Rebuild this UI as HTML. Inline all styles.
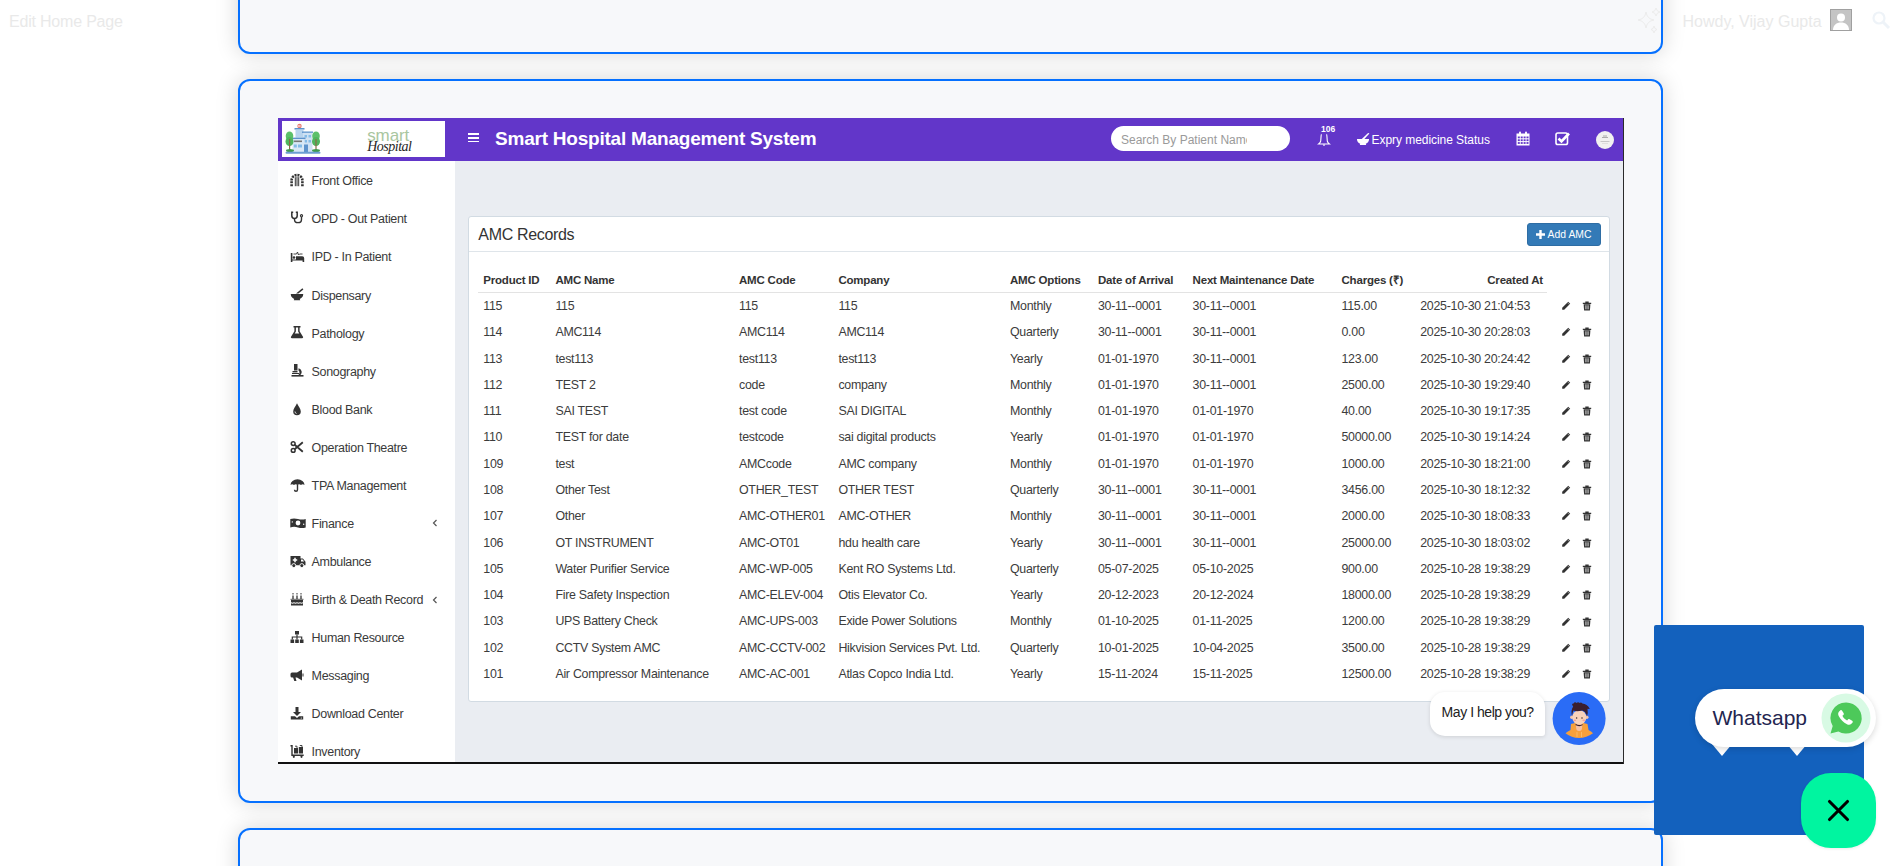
<!DOCTYPE html><html><head><meta charset="utf-8"><title>AMC Records</title><style>
*{box-sizing:border-box;margin:0;padding:0}
html,body{width:1900px;height:866px;overflow:hidden;background:#fff;font-family:"Liberation Sans",sans-serif}
body{position:relative}
.t{position:absolute;white-space:nowrap;line-height:1}
.a{position:absolute;display:block}
.card{position:absolute;left:238px;width:1425px;border:2px solid #0570ff;border-radius:12px;background:#f7f8fa;box-shadow:0 0 22px rgba(0,0,0,.17)}
</style></head><body>
<div class="card" style="top:-400px;height:454px"></div>
<div class="card" style="top:79px;height:724px"></div>
<div class="card" style="top:828px;height:400px"></div>
<div class="t" style="left:9.00px;top:14.00px;font-size:16px;font-weight:400;color:#e9e9e9;letter-spacing:-0.2px">Edit Home Page</div>
<div class="t" style="left:1682.50px;top:14.00px;font-size:16px;font-weight:400;color:#e9e9e9;">Howdy, Vijay Gupta</div>
<div class="a" style="left:1830px;top:9px;width:22px;height:22px;background:#c4c4c4;border:1px solid #a0a0a0;overflow:hidden"><svg width="20" height="20" viewBox="0 0 20 20" style="display:block"><circle cx="10" cy="7.5" r="4" fill="#fff"/><path d="M2 20c0-5 3.5-7.5 8-7.5s8 2.5 8 7.5z" fill="#fff"/></svg></div>
<svg class="a" style="left:1634px;top:6px;" width="30" height="30" viewBox="0 0 30 30"><path d="M12 6 Q13 13 20 14 Q13 15 12 22 Q11 15 4 14 Q11 13 12 6Z" fill="none" stroke="#ececec" stroke-width="1"/><path d="M22 2 Q22.5 5.5 26 6 Q22.5 6.5 22 10 Q21.5 6.5 18 6 Q21.5 5.5 22 2Z" fill="none" stroke="#ececec" stroke-width="1"/><path d="M20 20 Q20.4 23 23 23.5 Q20.4 24 20 27 Q19.6 24 17 23.5 Q19.6 23 20 20Z" fill="none" stroke="#ececec" stroke-width="1"/></svg>
<svg class="a" style="left:1870px;top:9px;" width="22" height="22" viewBox="0 0 22 22"><circle cx="9" cy="9" r="5.5" fill="none" stroke="#eef3f8" stroke-width="2.2"/><path d="M13 13l6 6" stroke="#eef3f8" stroke-width="3"/></svg>
<div class="a" style="left:278px;top:118px;width:1346px;height:646px;background:#eaedf2;overflow:hidden"></div>
<div class="a" style="left:278px;top:118px;width:1346px;height:43px;background:#6236c9"></div>
<div class="a" style="left:282px;top:121px;width:163px;height:36px;background:#fff"></div>
<svg class="a" style="left:285px;top:123px;" width="37" height="32" viewBox="0 0 37 32"><circle cx="14.5" cy="3" r="2.2" fill="#e8786e"/><path d="M14 2v2M13 3h3" stroke="#fff" stroke-width="0.6"/><rect x="9.5" y="5" width="10" height="1.6" fill="#5d93cc"/><rect x="10.5" y="6.6" width="8" height="8" fill="#b8d4ee"/><rect x="17" y="8.5" width="11" height="1.4" fill="#5d93cc"/><rect x="18" y="9.9" width="9.5" height="20" fill="#cfe1f3"/><rect x="19.5" y="12" width="2.5" height="2.5" fill="#84bce8"/><rect x="23.5" y="12" width="2.5" height="2.5" fill="#84bce8"/><rect x="19.5" y="17" width="2.5" height="2.5" fill="#84bce8"/><rect x="23.5" y="17" width="2.5" height="2.5" fill="#84bce8"/><rect x="6.5" y="14.6" width="14" height="1.6" fill="#5d93cc"/><rect x="7.5" y="16.2" width="12" height="13.6" fill="#d8e8f6"/><rect x="9" y="17.5" width="8" height="1.6" fill="#777"/><rect x="8.8" y="21.5" width="3" height="3" fill="#84bce8"/><rect x="13" y="21.5" width="4" height="3" fill="#84bce8"/><rect x="19" y="21.5" width="4" height="8.3" fill="#5d93cc"/><ellipse cx="4.5" cy="13" rx="3.8" ry="4.5" fill="#5cc06a"/><ellipse cx="4.5" cy="18.5" rx="4" ry="4.5" fill="#4fb55e"/><rect x="4" y="16" width="1.2" height="11" fill="#8a6a4a"/><ellipse cx="5" cy="27.5" rx="4" ry="1.5" fill="#3f9a4f"/><ellipse cx="31" cy="13" rx="3.8" ry="4.5" fill="#5cc06a"/><ellipse cx="31" cy="18.5" rx="4" ry="4.5" fill="#4fb55e"/><rect x="30.4" y="16" width="1.2" height="11" fill="#8a6a4a"/><ellipse cx="31" cy="27.5" rx="4" ry="1.5" fill="#3f9a4f"/><rect x="0.5" y="28.8" width="35" height="2" rx="1" fill="#6d9fd2"/></svg>
<div class="t" style="left:367.20px;top:127.00px;font-size:17px;font-weight:400;color:#a9c6a0;letter-spacing:-0.1px">smart</div>
<div class="t" style="left:367.20px;top:140.00px;font-size:14px;font-weight:400;color:#262626;font-family:'Liberation Serif',serif;font-style:italic;letter-spacing:-0.5px">Hospital</div>
<div class="a" style="left:468px;top:133.4px;width:11.4px;height:1.7px;background:#fff"></div>
<div class="a" style="left:468px;top:137px;width:11.4px;height:1.7px;background:#fff"></div>
<div class="a" style="left:468px;top:140.5px;width:11.4px;height:1.7px;background:#fff"></div>
<div class="t" style="left:495.00px;top:129.00px;font-size:19px;font-weight:700;color:#fff;letter-spacing:-0.22px">Smart Hospital Management System</div>
<div class="a" style="left:1111px;top:126px;width:179px;height:25px;background:#fff;border-radius:13px"></div>
<div class="a" style="left:1121px;top:126px;width:126px;height:25px;overflow:hidden"><div class="t" style="left:0px;top:8.00px;font-size:12px;font-weight:400;color:#9a9a9a;">Search By Patient Name</div></div>
<svg class="a" style="left:1317px;top:133px;" width="14" height="14" viewBox="0 0 14 14"><path d="M4.6 1.3Q4.2 1.3 4.1 3L3.7 8.2Q3.4 9.8 1.6 11H12.4Q10.6 9.8 10.3 8.2L9.9 3Q9.8 1.3 9.4 1.3" fill="none" stroke="#fff" stroke-width="1.1"/><path d="M5.8 11.6a1.2 1.2 0 0 0 2.4 0z" fill="#fff"/></svg>
<div class="t" style="left:1321.00px;top:125.00px;font-size:8.5px;font-weight:700;color:#fff;">106</div>
<svg class="a" style="left:1356px;top:132px;" width="14" height="14" viewBox="0 0 14 14"><path d="M1 7h12v0.5a6 5 0 0 1-3.2 4.3L10.2 13H3.8l.4-1.2A6 5 0 0 1 1 7.5z" fill="#fff"/><path d="M5.8 6.9l6-5.6q1-.6 1.6.3l-5 5.3z" fill="#fff"/></svg>
<div class="t" style="left:1371.50px;top:134.00px;font-size:12px;font-weight:400;color:#fff;letter-spacing:-0.05px">Expry medicine Status</div>
<svg class="a" style="left:1516px;top:131px;" width="14" height="15" viewBox="0 0 14 15"><path d="M0.5 2.5h13v12h-13z" fill="#fff"/><rect x="3" y="0.5" width="2" height="3" rx="1" fill="#fff"/><rect x="9" y="0.5" width="2" height="3" rx="1" fill="#fff"/><rect x="1.8" y="5.5" width="2" height="1.8" fill="#6236c9"/><rect x="4.7" y="5.5" width="2" height="1.8" fill="#6236c9"/><rect x="7.6" y="5.5" width="2" height="1.8" fill="#6236c9"/><rect x="10.5" y="5.5" width="2" height="1.8" fill="#6236c9"/><rect x="1.8" y="8.3" width="2" height="1.8" fill="#6236c9"/><rect x="4.7" y="8.3" width="2" height="1.8" fill="#6236c9"/><rect x="7.6" y="8.3" width="2" height="1.8" fill="#6236c9"/><rect x="10.5" y="8.3" width="2" height="1.8" fill="#6236c9"/><rect x="1.8" y="11.1" width="2" height="1.8" fill="#6236c9"/><rect x="4.7" y="11.1" width="2" height="1.8" fill="#6236c9"/><rect x="7.6" y="11.1" width="2" height="1.8" fill="#6236c9"/><rect x="10.5" y="11.1" width="2" height="1.8" fill="#6236c9"/></svg>
<svg class="a" style="left:1555px;top:131px;" width="17" height="15" viewBox="0 0 17 15"><rect x="1" y="2" width="11.5" height="11.5" rx="1.8" fill="none" stroke="#fff" stroke-width="1.6"/><path d="M3.5 7.5l3 3 7.5-8" fill="none" stroke="#fff" stroke-width="2.6"/></svg>
<svg class="a" style="left:1596px;top:130.5px;" width="18" height="18" viewBox="0 0 18 18"><circle cx="9" cy="9" r="9" fill="#f1f1f0"/><path d="M6 6.5h6M7 5h4" stroke="#9a9a9a" stroke-width="0.8"/><path d="M4.5 10.5h9" stroke="#bbb" stroke-width="0.8"/><path d="M6 12.5h6" stroke="#ccc" stroke-width="0.5"/></svg>
<div class="a" style="left:278px;top:161px;width:177px;height:601px;background:#fff"></div>
<svg class="a" style="left:290px;top:173.1px;" width="16" height="14" viewBox="0 0 16 14"><path d="M1.6 13.2V7.4a5.4 5.4 0 0 1 10.8 0v5.8" fill="none" stroke="#333" stroke-width="2.6" stroke-dasharray="2 0.9"/><path d="M5.3 4.2v9M7 3.6v9.6M8.7 4.2v9" stroke="#333" stroke-width="1"/></svg>
<div class="t" style="left:311.60px;top:175.00px;font-size:12.5px;font-weight:400;color:#3a3a3a;letter-spacing:-0.33px">Front Office</div>
<svg class="a" style="left:290px;top:211.2px;" width="16" height="14" viewBox="0 0 16 14"><path d="M3.2 1.2H1.8v3.6a2.7 2.7 0 0 0 5.4 0V1.2H5.8" fill="none" stroke="#333" stroke-width="1.5"/><path d="M4.5 7.6v.8a3.5 3.2 0 0 0 7 0V5.8" fill="none" stroke="#333" stroke-width="1.4"/><circle cx="11.5" cy="4.7" r="1.6" fill="#333"/><circle cx="11.5" cy="4.7" r="0.5" fill="#fff"/></svg>
<div class="t" style="left:311.60px;top:213.00px;font-size:12.5px;font-weight:400;color:#3a3a3a;letter-spacing:-0.33px">OPD - Out Patient</div>
<svg class="a" style="left:290px;top:249.2px;" width="16" height="14" viewBox="0 0 16 14"><path d="M0.8 4v9h1.6v-1.6h10.2V13h1.6V9.2a2 2 0 0 0-2-2H6v3.2H2.4V4z" fill="#333"/><circle cx="4" cy="8.5" r="1.3" fill="#333"/><path d="M3.5 5h3l1-2 1 3 1-1h3" fill="none" stroke="#333" stroke-width="0.9"/></svg>
<div class="t" style="left:311.60px;top:251.00px;font-size:12.5px;font-weight:400;color:#3a3a3a;letter-spacing:-0.33px">IPD - In Patient</div>
<svg class="a" style="left:290px;top:287.3px;" width="16" height="14" viewBox="0 0 16 14"><path d="M0.8 7h12.4v.6a6.2 5 0 0 1-3.4 4.3l.4 1.3H3.8l.4-1.3A6.2 5 0 0 1 .8 7.6z" fill="#333"/><path d="M6 6.6l6.4-5.4 1 1.2-5 4.2z" fill="#333"/></svg>
<div class="t" style="left:311.60px;top:290.00px;font-size:12.5px;font-weight:400;color:#3a3a3a;letter-spacing:-0.33px">Dispensary</div>
<svg class="a" style="left:290px;top:325.4px;" width="16" height="14" viewBox="0 0 16 14"><path d="M3.5 1h7v1.6H9.6v3.6l3.4 5.6a1 1 0 0 1-.9 1.5H1.9a1 1 0 0 1-.9-1.5l3.4-5.6V2.6H3.5z" fill="#333"/><path d="M5.9 2.6h2.2v4l1.2 2H4.7l1.2-2z" fill="#fff"/></svg>
<div class="t" style="left:311.60px;top:328.00px;font-size:12.5px;font-weight:400;color:#3a3a3a;letter-spacing:-0.33px">Pathology</div>
<svg class="a" style="left:290px;top:363.4px;" width="16" height="14" viewBox="0 0 16 14"><path d="M4 1h3.5v6.5H4z" fill="#333"/><path d="M2.5 8h5v1.4h-5z" fill="#333"/><path d="M8.5 5.2a4 4 0 0 1 1.8 7H8a2.8 2.8 0 0 0 .5-4.6z" fill="#333"/><path d="M1.5 12h12v1.6h-12z" fill="#333"/><path d="M2 10.5h7" stroke="#333" stroke-width="1"/></svg>
<div class="t" style="left:311.60px;top:366.00px;font-size:12.5px;font-weight:400;color:#3a3a3a;letter-spacing:-0.33px">Sonography</div>
<svg class="a" style="left:290px;top:401.5px;" width="16" height="14" viewBox="0 0 16 14"><path d="M7 1.2C5.6 4.5 3.2 6.6 3.2 9.4a3.8 3.8 0 0 0 7.6 0C10.8 6.6 8.4 4.5 7 1.2z" fill="#333"/><path d="M5 9.5a2 2 0 0 0 1.5 2" fill="none" stroke="#fff" stroke-width="0.8"/></svg>
<div class="t" style="left:311.60px;top:404.00px;font-size:12.5px;font-weight:400;color:#3a3a3a;letter-spacing:-0.33px">Blood Bank</div>
<svg class="a" style="left:290px;top:439.6px;" width="16" height="14" viewBox="0 0 16 14"><circle cx="3.2" cy="3.6" r="1.9" fill="none" stroke="#333" stroke-width="1.5"/><circle cx="3.2" cy="10.4" r="1.9" fill="none" stroke="#333" stroke-width="1.5"/><path d="M4.6 4.8L12.8 11.8M4.6 9.2L12.8 2.2" stroke="#333" stroke-width="1.8"/></svg>
<div class="t" style="left:311.60px;top:442.00px;font-size:12.5px;font-weight:400;color:#3a3a3a;letter-spacing:-0.33px">Operation Theatre</div>
<svg class="a" style="left:290px;top:477.7px;" width="16" height="14" viewBox="0 0 16 14"><path d="M7.5 1.2a7 5.8 0 0 0-7 5.8c1.1-1 2.3-1 3.5 0 1.1-1 2.3-1 3.5 0 1.1-1 2.3-1 3.5 0 1.1-1 2.3-1 3.5 0A7 5.8 0 0 0 7.5 1.2z" fill="#333"/><path d="M7.5 6.5v5.2a1.5 1.5 0 0 1-3 0" fill="none" stroke="#333" stroke-width="1.4"/></svg>
<div class="t" style="left:311.60px;top:480.00px;font-size:12.5px;font-weight:400;color:#3a3a3a;letter-spacing:-0.33px">TPA Management</div>
<svg class="a" style="left:290px;top:515.7px;" width="16" height="14" viewBox="0 0 16 14"><path fill-rule="evenodd" d="M0.3 3q3.7 -1.2 7.7 0t7.7 0v8.4q-3.7 1.2-7.7 0t-7.7 0z M8 4.6a2.4 2.4 0 1 0 0 4.8 2.4 2.4 0 1 0 0-4.8z M2.3 5.2a0.7 0.7 0 1 0 0 1.4 0.7 0.7 0 1 0 0-1.4z M13.7 7.6a0.7 0.7 0 1 0 0 1.4 0.7 0.7 0 1 0 0-1.4z" fill="#333"/></svg>
<div class="t" style="left:311.60px;top:518.00px;font-size:12.5px;font-weight:400;color:#3a3a3a;letter-spacing:-0.33px">Finance</div>
<svg class="a" style="left:432px;top:519.4px;" width="6" height="8" viewBox="0 0 6 8"><path d="M4.5 1L1.5 4l3 3" fill="none" stroke="#555" stroke-width="1.2"/></svg>
<svg class="a" style="left:290px;top:553.8px;" width="16" height="14" viewBox="0 0 16 14"><path d="M0.5 2h10v2.5h2.4l2.6 3.2v3.6H0.5z" fill="#333"/><circle cx="3.8" cy="11.6" r="2" fill="#333" stroke="#fff" stroke-width="0.9"/><circle cx="11.8" cy="11.6" r="2" fill="#333" stroke="#fff" stroke-width="0.9"/><path d="M5 3.8v4.4M2.8 6h4.4" stroke="#fff" stroke-width="1.5"/><path d="M11 5.5h1.6l1.5 2h-3.1z" fill="#fff"/></svg>
<div class="t" style="left:311.60px;top:556.00px;font-size:12.5px;font-weight:400;color:#3a3a3a;letter-spacing:-0.33px">Ambulance</div>
<svg class="a" style="left:290px;top:591.9px;" width="16" height="14" viewBox="0 0 16 14"><path d="M1 8h12v2.3c-1 .6-2 .6-3 0-1 .6-2 .6-3 0-1 .6-2 .6-3 0-1 .6-2 .6-3 0z" fill="#333"/><path d="M1 11.3c1 .5 2 .5 3 0 1 .5 2 .5 3 0 1 .5 2 .5 3 0 1 .5 2 .5 3 0V13.5H1z" fill="#333"/><path d="M3 3.5v3.5M7 3.5v3.5M11 3.5v3.5" stroke="#333" stroke-width="1.3"/><path d="M3 1v1.5M7 1v1.5M11 1v1.5" stroke="#333" stroke-width="1"/><path d="M0.5 7.3h13" stroke="#333" stroke-width="0.8"/></svg>
<div class="t" style="left:311.60px;top:594.00px;font-size:12.5px;font-weight:400;color:#3a3a3a;letter-spacing:-0.33px">Birth &amp; Death Record</div>
<svg class="a" style="left:432px;top:595.6px;" width="6" height="8" viewBox="0 0 6 8"><path d="M4.5 1L1.5 4l3 3" fill="none" stroke="#555" stroke-width="1.2"/></svg>
<svg class="a" style="left:290px;top:629.9px;" width="16" height="14" viewBox="0 0 16 14"><rect x="5" y="1" width="4" height="3.5" fill="#333"/><path d="M7 4.5v3M2.3 9.5V7h9.4v2.5M7 7v2.5" fill="none" stroke="#333" stroke-width="1.2"/><rect x="0.5" y="9.5" width="3.6" height="3.5" fill="#333"/><rect x="5.2" y="9.5" width="3.6" height="3.5" fill="#333"/><rect x="9.9" y="9.5" width="3.6" height="3.5" fill="#333"/></svg>
<div class="t" style="left:311.60px;top:632.00px;font-size:12.5px;font-weight:400;color:#3a3a3a;letter-spacing:-0.33px">Human Resource</div>
<svg class="a" style="left:290px;top:668.0px;" width="16" height="14" viewBox="0 0 16 14"><path d="M12 1.5v11l-5-3H5.5l1 3.5h-2.2l-1.2-3.5H2a1.5 1.5 0 0 1-1.5-1.5V6a1.5 1.5 0 0 1 1.5-1.5h5z" fill="#333"/><path d="M12.5 5.5h1v3h-1z" fill="#333"/></svg>
<div class="t" style="left:311.60px;top:670.00px;font-size:12.5px;font-weight:400;color:#3a3a3a;letter-spacing:-0.33px">Messaging</div>
<svg class="a" style="left:290px;top:706.1px;" width="16" height="14" viewBox="0 0 16 14"><path d="M5.5 1h3v5h2.5L7 10 3 6h2.5z" fill="#333"/><path d="M0.8 10.3h4.2l2 1.8 2-1.8h4.2v3.2H.8z" fill="#333"/><circle cx="11.3" cy="12" r="0.6" fill="#fff"/></svg>
<div class="t" style="left:311.60px;top:708.00px;font-size:12.5px;font-weight:400;color:#3a3a3a;letter-spacing:-0.33px">Download Center</div>
<svg class="a" style="left:290px;top:744.1px;" width="16" height="14" viewBox="0 0 16 14"><path d="M0.5 1h2.2v9.5h11v1.4H1.3V2.4H.5z" fill="#333"/><rect x="4" y="4" width="4" height="5.5" fill="#333"/><rect x="8.8" y="3" width="4.2" height="6.5" fill="#333"/><path d="M5 2.2h2v1.8M9.8 1.5h2.2v1.5" fill="none" stroke="#333" stroke-width="0.9"/><circle cx="3.8" cy="12.8" r="1.1" fill="#333"/><circle cx="11.5" cy="12.8" r="1.1" fill="#333"/></svg>
<div class="t" style="left:311.60px;top:746.00px;font-size:12.5px;font-weight:400;color:#3a3a3a;letter-spacing:-0.33px">Inventory</div>
<div class="a" style="left:278px;top:762px;width:1346px;height:2px;background:#111"></div>
<div class="a" style="left:1623px;top:118px;width:1px;height:646px;background:#2a2a2a"></div>
<div class="a" style="left:468px;top:216px;width:1142px;height:486px;background:#fff;border:1px solid #d2dbe3;border-radius:3px"></div>
<div class="a" style="left:469px;top:251px;width:1140px;height:1px;background:#dfe5ea"></div>
<div class="t" style="left:478.30px;top:227.00px;font-size:16px;font-weight:400;color:#333;letter-spacing:-0.33px">AMC Records</div>
<div class="a" style="left:1527px;top:223px;width:74px;height:23px;background:#337ab7;border:1px solid #2e6da4;border-radius:3px"></div>
<svg class="a" style="left:1536px;top:230px;" width="9" height="9" viewBox="0 0 9 9"><path d="M3.3 0h2.4v3.3H9v2.4H5.7V9H3.3V5.7H0V3.3h3.3z" fill="#fff"/></svg>
<div class="t" style="left:1547.60px;top:230.00px;font-size:10.4px;font-weight:400;color:#fff;">Add AMC</div>
<div class="t" style="left:483.30px;top:275.00px;font-size:11.5px;font-weight:700;color:#333;letter-spacing:-0.2px">Product ID</div>
<div class="t" style="left:555.40px;top:275.00px;font-size:11.5px;font-weight:700;color:#333;letter-spacing:-0.2px">AMC Name</div>
<div class="t" style="left:739.00px;top:275.00px;font-size:11.5px;font-weight:700;color:#333;letter-spacing:-0.2px">AMC Code</div>
<div class="t" style="left:838.40px;top:275.00px;font-size:11.5px;font-weight:700;color:#333;letter-spacing:-0.2px">Company</div>
<div class="t" style="left:1010.00px;top:275.00px;font-size:11.5px;font-weight:700;color:#333;letter-spacing:-0.2px">AMC Options</div>
<div class="t" style="left:1098.00px;top:275.00px;font-size:11.5px;font-weight:700;color:#333;letter-spacing:-0.2px">Date of Arrival</div>
<div class="t" style="left:1192.60px;top:275.00px;font-size:11.5px;font-weight:700;color:#333;letter-spacing:-0.2px">Next Maintenance Date</div>
<div class="t" style="left:1341.50px;top:275.00px;font-size:11.5px;font-weight:700;color:#333;letter-spacing:-0.2px">Charges (₹)</div>
<div class="t" style="right:357.00px;top:275.00px;font-size:11.5px;font-weight:700;color:#333;letter-spacing:-0.2px">Created At</div>
<div class="a" style="left:478px;top:292px;width:1069px;height:1px;background:#e3e3e3"></div>
<div class="t" style="left:483.30px;top:300.00px;font-size:12.4px;font-weight:400;color:#3c3c3c;letter-spacing:-0.27px">115</div>
<div class="t" style="left:555.40px;top:300.00px;font-size:12.4px;font-weight:400;color:#3c3c3c;letter-spacing:-0.27px">115</div>
<div class="t" style="left:739.00px;top:300.00px;font-size:12.4px;font-weight:400;color:#3c3c3c;letter-spacing:-0.27px">115</div>
<div class="t" style="left:838.40px;top:300.00px;font-size:12.4px;font-weight:400;color:#3c3c3c;letter-spacing:-0.27px">115</div>
<div class="t" style="left:1010.00px;top:300.00px;font-size:12.4px;font-weight:400;color:#3c3c3c;letter-spacing:-0.27px">Monthly</div>
<div class="t" style="left:1098.00px;top:300.00px;font-size:12.4px;font-weight:400;color:#3c3c3c;letter-spacing:-0.27px">30-11--0001</div>
<div class="t" style="left:1192.60px;top:300.00px;font-size:12.4px;font-weight:400;color:#3c3c3c;letter-spacing:-0.27px">30-11--0001</div>
<div class="t" style="left:1341.50px;top:300.00px;font-size:12.4px;font-weight:400;color:#3c3c3c;letter-spacing:-0.27px">115.00</div>
<div class="t" style="left:1420.20px;top:300.00px;font-size:12.4px;font-weight:400;color:#3c3c3c;letter-spacing:-0.27px">2025-10-30 21:04:53</div>
<svg class="a" style="left:1561px;top:301.0px;" width="10" height="10" viewBox="0 0 10 10"><path d="M7.2 0.8l2 2-6 6H1.2v-2z" fill="#333"/><path d="M6.4 1.6l2 2" stroke="#fff" stroke-width="0.5"/></svg>
<svg class="a" style="left:1582px;top:301.0px;" width="10" height="10" viewBox="0 0 10 10"><path d="M0.8 1.8h8.4v1.2H.8z M3.3.6h3.4v1.2H3.3z" fill="#333"/><path d="M1.6 3.2h6.8l-.5 6.3H2.1z" fill="#333"/><path d="M3.7 4.3v4M5 4.3v4M6.3 4.3v4" stroke="#fff" stroke-width="0.6"/></svg>
<div class="t" style="left:483.30px;top:326.00px;font-size:12.4px;font-weight:400;color:#3c3c3c;letter-spacing:-0.27px">114</div>
<div class="t" style="left:555.40px;top:326.00px;font-size:12.4px;font-weight:400;color:#3c3c3c;letter-spacing:-0.27px">AMC114</div>
<div class="t" style="left:739.00px;top:326.00px;font-size:12.4px;font-weight:400;color:#3c3c3c;letter-spacing:-0.27px">AMC114</div>
<div class="t" style="left:838.40px;top:326.00px;font-size:12.4px;font-weight:400;color:#3c3c3c;letter-spacing:-0.27px">AMC114</div>
<div class="t" style="left:1010.00px;top:326.00px;font-size:12.4px;font-weight:400;color:#3c3c3c;letter-spacing:-0.27px">Quarterly</div>
<div class="t" style="left:1098.00px;top:326.00px;font-size:12.4px;font-weight:400;color:#3c3c3c;letter-spacing:-0.27px">30-11--0001</div>
<div class="t" style="left:1192.60px;top:326.00px;font-size:12.4px;font-weight:400;color:#3c3c3c;letter-spacing:-0.27px">30-11--0001</div>
<div class="t" style="left:1341.50px;top:326.00px;font-size:12.4px;font-weight:400;color:#3c3c3c;letter-spacing:-0.27px">0.00</div>
<div class="t" style="left:1420.20px;top:326.00px;font-size:12.4px;font-weight:400;color:#3c3c3c;letter-spacing:-0.27px">2025-10-30 20:28:03</div>
<svg class="a" style="left:1561px;top:327.3px;" width="10" height="10" viewBox="0 0 10 10"><path d="M7.2 0.8l2 2-6 6H1.2v-2z" fill="#333"/><path d="M6.4 1.6l2 2" stroke="#fff" stroke-width="0.5"/></svg>
<svg class="a" style="left:1582px;top:327.3px;" width="10" height="10" viewBox="0 0 10 10"><path d="M0.8 1.8h8.4v1.2H.8z M3.3.6h3.4v1.2H3.3z" fill="#333"/><path d="M1.6 3.2h6.8l-.5 6.3H2.1z" fill="#333"/><path d="M3.7 4.3v4M5 4.3v4M6.3 4.3v4" stroke="#fff" stroke-width="0.6"/></svg>
<div class="t" style="left:483.30px;top:353.00px;font-size:12.4px;font-weight:400;color:#3c3c3c;letter-spacing:-0.27px">113</div>
<div class="t" style="left:555.40px;top:353.00px;font-size:12.4px;font-weight:400;color:#3c3c3c;letter-spacing:-0.27px">test113</div>
<div class="t" style="left:739.00px;top:353.00px;font-size:12.4px;font-weight:400;color:#3c3c3c;letter-spacing:-0.27px">test113</div>
<div class="t" style="left:838.40px;top:353.00px;font-size:12.4px;font-weight:400;color:#3c3c3c;letter-spacing:-0.27px">test113</div>
<div class="t" style="left:1010.00px;top:353.00px;font-size:12.4px;font-weight:400;color:#3c3c3c;letter-spacing:-0.27px">Yearly</div>
<div class="t" style="left:1098.00px;top:353.00px;font-size:12.4px;font-weight:400;color:#3c3c3c;letter-spacing:-0.27px">01-01-1970</div>
<div class="t" style="left:1192.60px;top:353.00px;font-size:12.4px;font-weight:400;color:#3c3c3c;letter-spacing:-0.27px">30-11--0001</div>
<div class="t" style="left:1341.50px;top:353.00px;font-size:12.4px;font-weight:400;color:#3c3c3c;letter-spacing:-0.27px">123.00</div>
<div class="t" style="left:1420.20px;top:353.00px;font-size:12.4px;font-weight:400;color:#3c3c3c;letter-spacing:-0.27px">2025-10-30 20:24:42</div>
<svg class="a" style="left:1561px;top:353.6px;" width="10" height="10" viewBox="0 0 10 10"><path d="M7.2 0.8l2 2-6 6H1.2v-2z" fill="#333"/><path d="M6.4 1.6l2 2" stroke="#fff" stroke-width="0.5"/></svg>
<svg class="a" style="left:1582px;top:353.6px;" width="10" height="10" viewBox="0 0 10 10"><path d="M0.8 1.8h8.4v1.2H.8z M3.3.6h3.4v1.2H3.3z" fill="#333"/><path d="M1.6 3.2h6.8l-.5 6.3H2.1z" fill="#333"/><path d="M3.7 4.3v4M5 4.3v4M6.3 4.3v4" stroke="#fff" stroke-width="0.6"/></svg>
<div class="t" style="left:483.30px;top:379.00px;font-size:12.4px;font-weight:400;color:#3c3c3c;letter-spacing:-0.27px">112</div>
<div class="t" style="left:555.40px;top:379.00px;font-size:12.4px;font-weight:400;color:#3c3c3c;letter-spacing:-0.27px">TEST 2</div>
<div class="t" style="left:739.00px;top:379.00px;font-size:12.4px;font-weight:400;color:#3c3c3c;letter-spacing:-0.27px">code</div>
<div class="t" style="left:838.40px;top:379.00px;font-size:12.4px;font-weight:400;color:#3c3c3c;letter-spacing:-0.27px">company</div>
<div class="t" style="left:1010.00px;top:379.00px;font-size:12.4px;font-weight:400;color:#3c3c3c;letter-spacing:-0.27px">Monthly</div>
<div class="t" style="left:1098.00px;top:379.00px;font-size:12.4px;font-weight:400;color:#3c3c3c;letter-spacing:-0.27px">01-01-1970</div>
<div class="t" style="left:1192.60px;top:379.00px;font-size:12.4px;font-weight:400;color:#3c3c3c;letter-spacing:-0.27px">30-11--0001</div>
<div class="t" style="left:1341.50px;top:379.00px;font-size:12.4px;font-weight:400;color:#3c3c3c;letter-spacing:-0.27px">2500.00</div>
<div class="t" style="left:1420.20px;top:379.00px;font-size:12.4px;font-weight:400;color:#3c3c3c;letter-spacing:-0.27px">2025-10-30 19:29:40</div>
<svg class="a" style="left:1561px;top:379.9px;" width="10" height="10" viewBox="0 0 10 10"><path d="M7.2 0.8l2 2-6 6H1.2v-2z" fill="#333"/><path d="M6.4 1.6l2 2" stroke="#fff" stroke-width="0.5"/></svg>
<svg class="a" style="left:1582px;top:379.9px;" width="10" height="10" viewBox="0 0 10 10"><path d="M0.8 1.8h8.4v1.2H.8z M3.3.6h3.4v1.2H3.3z" fill="#333"/><path d="M1.6 3.2h6.8l-.5 6.3H2.1z" fill="#333"/><path d="M3.7 4.3v4M5 4.3v4M6.3 4.3v4" stroke="#fff" stroke-width="0.6"/></svg>
<div class="t" style="left:483.30px;top:405.00px;font-size:12.4px;font-weight:400;color:#3c3c3c;letter-spacing:-0.27px">111</div>
<div class="t" style="left:555.40px;top:405.00px;font-size:12.4px;font-weight:400;color:#3c3c3c;letter-spacing:-0.27px">SAI TEST</div>
<div class="t" style="left:739.00px;top:405.00px;font-size:12.4px;font-weight:400;color:#3c3c3c;letter-spacing:-0.27px">test code</div>
<div class="t" style="left:838.40px;top:405.00px;font-size:12.4px;font-weight:400;color:#3c3c3c;letter-spacing:-0.27px">SAI DIGITAL</div>
<div class="t" style="left:1010.00px;top:405.00px;font-size:12.4px;font-weight:400;color:#3c3c3c;letter-spacing:-0.27px">Monthly</div>
<div class="t" style="left:1098.00px;top:405.00px;font-size:12.4px;font-weight:400;color:#3c3c3c;letter-spacing:-0.27px">01-01-1970</div>
<div class="t" style="left:1192.60px;top:405.00px;font-size:12.4px;font-weight:400;color:#3c3c3c;letter-spacing:-0.27px">01-01-1970</div>
<div class="t" style="left:1341.50px;top:405.00px;font-size:12.4px;font-weight:400;color:#3c3c3c;letter-spacing:-0.27px">40.00</div>
<div class="t" style="left:1420.20px;top:405.00px;font-size:12.4px;font-weight:400;color:#3c3c3c;letter-spacing:-0.27px">2025-10-30 19:17:35</div>
<svg class="a" style="left:1561px;top:406.2px;" width="10" height="10" viewBox="0 0 10 10"><path d="M7.2 0.8l2 2-6 6H1.2v-2z" fill="#333"/><path d="M6.4 1.6l2 2" stroke="#fff" stroke-width="0.5"/></svg>
<svg class="a" style="left:1582px;top:406.2px;" width="10" height="10" viewBox="0 0 10 10"><path d="M0.8 1.8h8.4v1.2H.8z M3.3.6h3.4v1.2H3.3z" fill="#333"/><path d="M1.6 3.2h6.8l-.5 6.3H2.1z" fill="#333"/><path d="M3.7 4.3v4M5 4.3v4M6.3 4.3v4" stroke="#fff" stroke-width="0.6"/></svg>
<div class="t" style="left:483.30px;top:431.00px;font-size:12.4px;font-weight:400;color:#3c3c3c;letter-spacing:-0.27px">110</div>
<div class="t" style="left:555.40px;top:431.00px;font-size:12.4px;font-weight:400;color:#3c3c3c;letter-spacing:-0.27px">TEST for date</div>
<div class="t" style="left:739.00px;top:431.00px;font-size:12.4px;font-weight:400;color:#3c3c3c;letter-spacing:-0.27px">testcode</div>
<div class="t" style="left:838.40px;top:431.00px;font-size:12.4px;font-weight:400;color:#3c3c3c;letter-spacing:-0.27px">sai digital products</div>
<div class="t" style="left:1010.00px;top:431.00px;font-size:12.4px;font-weight:400;color:#3c3c3c;letter-spacing:-0.27px">Yearly</div>
<div class="t" style="left:1098.00px;top:431.00px;font-size:12.4px;font-weight:400;color:#3c3c3c;letter-spacing:-0.27px">01-01-1970</div>
<div class="t" style="left:1192.60px;top:431.00px;font-size:12.4px;font-weight:400;color:#3c3c3c;letter-spacing:-0.27px">01-01-1970</div>
<div class="t" style="left:1341.50px;top:431.00px;font-size:12.4px;font-weight:400;color:#3c3c3c;letter-spacing:-0.27px">50000.00</div>
<div class="t" style="left:1420.20px;top:431.00px;font-size:12.4px;font-weight:400;color:#3c3c3c;letter-spacing:-0.27px">2025-10-30 19:14:24</div>
<svg class="a" style="left:1561px;top:432.4px;" width="10" height="10" viewBox="0 0 10 10"><path d="M7.2 0.8l2 2-6 6H1.2v-2z" fill="#333"/><path d="M6.4 1.6l2 2" stroke="#fff" stroke-width="0.5"/></svg>
<svg class="a" style="left:1582px;top:432.4px;" width="10" height="10" viewBox="0 0 10 10"><path d="M0.8 1.8h8.4v1.2H.8z M3.3.6h3.4v1.2H3.3z" fill="#333"/><path d="M1.6 3.2h6.8l-.5 6.3H2.1z" fill="#333"/><path d="M3.7 4.3v4M5 4.3v4M6.3 4.3v4" stroke="#fff" stroke-width="0.6"/></svg>
<div class="t" style="left:483.30px;top:458.00px;font-size:12.4px;font-weight:400;color:#3c3c3c;letter-spacing:-0.27px">109</div>
<div class="t" style="left:555.40px;top:458.00px;font-size:12.4px;font-weight:400;color:#3c3c3c;letter-spacing:-0.27px">test</div>
<div class="t" style="left:739.00px;top:458.00px;font-size:12.4px;font-weight:400;color:#3c3c3c;letter-spacing:-0.27px">AMCcode</div>
<div class="t" style="left:838.40px;top:458.00px;font-size:12.4px;font-weight:400;color:#3c3c3c;letter-spacing:-0.27px">AMC company</div>
<div class="t" style="left:1010.00px;top:458.00px;font-size:12.4px;font-weight:400;color:#3c3c3c;letter-spacing:-0.27px">Monthly</div>
<div class="t" style="left:1098.00px;top:458.00px;font-size:12.4px;font-weight:400;color:#3c3c3c;letter-spacing:-0.27px">01-01-1970</div>
<div class="t" style="left:1192.60px;top:458.00px;font-size:12.4px;font-weight:400;color:#3c3c3c;letter-spacing:-0.27px">01-01-1970</div>
<div class="t" style="left:1341.50px;top:458.00px;font-size:12.4px;font-weight:400;color:#3c3c3c;letter-spacing:-0.27px">1000.00</div>
<div class="t" style="left:1420.20px;top:458.00px;font-size:12.4px;font-weight:400;color:#3c3c3c;letter-spacing:-0.27px">2025-10-30 18:21:00</div>
<svg class="a" style="left:1561px;top:458.7px;" width="10" height="10" viewBox="0 0 10 10"><path d="M7.2 0.8l2 2-6 6H1.2v-2z" fill="#333"/><path d="M6.4 1.6l2 2" stroke="#fff" stroke-width="0.5"/></svg>
<svg class="a" style="left:1582px;top:458.7px;" width="10" height="10" viewBox="0 0 10 10"><path d="M0.8 1.8h8.4v1.2H.8z M3.3.6h3.4v1.2H3.3z" fill="#333"/><path d="M1.6 3.2h6.8l-.5 6.3H2.1z" fill="#333"/><path d="M3.7 4.3v4M5 4.3v4M6.3 4.3v4" stroke="#fff" stroke-width="0.6"/></svg>
<div class="t" style="left:483.30px;top:484.00px;font-size:12.4px;font-weight:400;color:#3c3c3c;letter-spacing:-0.27px">108</div>
<div class="t" style="left:555.40px;top:484.00px;font-size:12.4px;font-weight:400;color:#3c3c3c;letter-spacing:-0.27px">Other Test</div>
<div class="t" style="left:739.00px;top:484.00px;font-size:12.4px;font-weight:400;color:#3c3c3c;letter-spacing:-0.27px">OTHER_TEST</div>
<div class="t" style="left:838.40px;top:484.00px;font-size:12.4px;font-weight:400;color:#3c3c3c;letter-spacing:-0.27px">OTHER TEST</div>
<div class="t" style="left:1010.00px;top:484.00px;font-size:12.4px;font-weight:400;color:#3c3c3c;letter-spacing:-0.27px">Quarterly</div>
<div class="t" style="left:1098.00px;top:484.00px;font-size:12.4px;font-weight:400;color:#3c3c3c;letter-spacing:-0.27px">30-11--0001</div>
<div class="t" style="left:1192.60px;top:484.00px;font-size:12.4px;font-weight:400;color:#3c3c3c;letter-spacing:-0.27px">30-11--0001</div>
<div class="t" style="left:1341.50px;top:484.00px;font-size:12.4px;font-weight:400;color:#3c3c3c;letter-spacing:-0.27px">3456.00</div>
<div class="t" style="left:1420.20px;top:484.00px;font-size:12.4px;font-weight:400;color:#3c3c3c;letter-spacing:-0.27px">2025-10-30 18:12:32</div>
<svg class="a" style="left:1561px;top:485.0px;" width="10" height="10" viewBox="0 0 10 10"><path d="M7.2 0.8l2 2-6 6H1.2v-2z" fill="#333"/><path d="M6.4 1.6l2 2" stroke="#fff" stroke-width="0.5"/></svg>
<svg class="a" style="left:1582px;top:485.0px;" width="10" height="10" viewBox="0 0 10 10"><path d="M0.8 1.8h8.4v1.2H.8z M3.3.6h3.4v1.2H3.3z" fill="#333"/><path d="M1.6 3.2h6.8l-.5 6.3H2.1z" fill="#333"/><path d="M3.7 4.3v4M5 4.3v4M6.3 4.3v4" stroke="#fff" stroke-width="0.6"/></svg>
<div class="t" style="left:483.30px;top:510.00px;font-size:12.4px;font-weight:400;color:#3c3c3c;letter-spacing:-0.27px">107</div>
<div class="t" style="left:555.40px;top:510.00px;font-size:12.4px;font-weight:400;color:#3c3c3c;letter-spacing:-0.27px">Other</div>
<div class="t" style="left:739.00px;top:510.00px;font-size:12.4px;font-weight:400;color:#3c3c3c;letter-spacing:-0.27px">AMC-OTHER01</div>
<div class="t" style="left:838.40px;top:510.00px;font-size:12.4px;font-weight:400;color:#3c3c3c;letter-spacing:-0.27px">AMC-OTHER</div>
<div class="t" style="left:1010.00px;top:510.00px;font-size:12.4px;font-weight:400;color:#3c3c3c;letter-spacing:-0.27px">Monthly</div>
<div class="t" style="left:1098.00px;top:510.00px;font-size:12.4px;font-weight:400;color:#3c3c3c;letter-spacing:-0.27px">30-11--0001</div>
<div class="t" style="left:1192.60px;top:510.00px;font-size:12.4px;font-weight:400;color:#3c3c3c;letter-spacing:-0.27px">30-11--0001</div>
<div class="t" style="left:1341.50px;top:510.00px;font-size:12.4px;font-weight:400;color:#3c3c3c;letter-spacing:-0.27px">2000.00</div>
<div class="t" style="left:1420.20px;top:510.00px;font-size:12.4px;font-weight:400;color:#3c3c3c;letter-spacing:-0.27px">2025-10-30 18:08:33</div>
<svg class="a" style="left:1561px;top:511.3px;" width="10" height="10" viewBox="0 0 10 10"><path d="M7.2 0.8l2 2-6 6H1.2v-2z" fill="#333"/><path d="M6.4 1.6l2 2" stroke="#fff" stroke-width="0.5"/></svg>
<svg class="a" style="left:1582px;top:511.3px;" width="10" height="10" viewBox="0 0 10 10"><path d="M0.8 1.8h8.4v1.2H.8z M3.3.6h3.4v1.2H3.3z" fill="#333"/><path d="M1.6 3.2h6.8l-.5 6.3H2.1z" fill="#333"/><path d="M3.7 4.3v4M5 4.3v4M6.3 4.3v4" stroke="#fff" stroke-width="0.6"/></svg>
<div class="t" style="left:483.30px;top:537.00px;font-size:12.4px;font-weight:400;color:#3c3c3c;letter-spacing:-0.27px">106</div>
<div class="t" style="left:555.40px;top:537.00px;font-size:12.4px;font-weight:400;color:#3c3c3c;letter-spacing:-0.27px">OT INSTRUMENT</div>
<div class="t" style="left:739.00px;top:537.00px;font-size:12.4px;font-weight:400;color:#3c3c3c;letter-spacing:-0.27px">AMC-OT01</div>
<div class="t" style="left:838.40px;top:537.00px;font-size:12.4px;font-weight:400;color:#3c3c3c;letter-spacing:-0.27px">hdu health care</div>
<div class="t" style="left:1010.00px;top:537.00px;font-size:12.4px;font-weight:400;color:#3c3c3c;letter-spacing:-0.27px">Yearly</div>
<div class="t" style="left:1098.00px;top:537.00px;font-size:12.4px;font-weight:400;color:#3c3c3c;letter-spacing:-0.27px">30-11--0001</div>
<div class="t" style="left:1192.60px;top:537.00px;font-size:12.4px;font-weight:400;color:#3c3c3c;letter-spacing:-0.27px">30-11--0001</div>
<div class="t" style="left:1341.50px;top:537.00px;font-size:12.4px;font-weight:400;color:#3c3c3c;letter-spacing:-0.27px">25000.00</div>
<div class="t" style="left:1420.20px;top:537.00px;font-size:12.4px;font-weight:400;color:#3c3c3c;letter-spacing:-0.27px">2025-10-30 18:03:02</div>
<svg class="a" style="left:1561px;top:537.6px;" width="10" height="10" viewBox="0 0 10 10"><path d="M7.2 0.8l2 2-6 6H1.2v-2z" fill="#333"/><path d="M6.4 1.6l2 2" stroke="#fff" stroke-width="0.5"/></svg>
<svg class="a" style="left:1582px;top:537.6px;" width="10" height="10" viewBox="0 0 10 10"><path d="M0.8 1.8h8.4v1.2H.8z M3.3.6h3.4v1.2H3.3z" fill="#333"/><path d="M1.6 3.2h6.8l-.5 6.3H2.1z" fill="#333"/><path d="M3.7 4.3v4M5 4.3v4M6.3 4.3v4" stroke="#fff" stroke-width="0.6"/></svg>
<div class="t" style="left:483.30px;top:563.00px;font-size:12.4px;font-weight:400;color:#3c3c3c;letter-spacing:-0.27px">105</div>
<div class="t" style="left:555.40px;top:563.00px;font-size:12.4px;font-weight:400;color:#3c3c3c;letter-spacing:-0.27px">Water Purifier Service</div>
<div class="t" style="left:739.00px;top:563.00px;font-size:12.4px;font-weight:400;color:#3c3c3c;letter-spacing:-0.27px">AMC-WP-005</div>
<div class="t" style="left:838.40px;top:563.00px;font-size:12.4px;font-weight:400;color:#3c3c3c;letter-spacing:-0.27px">Kent RO Systems Ltd.</div>
<div class="t" style="left:1010.00px;top:563.00px;font-size:12.4px;font-weight:400;color:#3c3c3c;letter-spacing:-0.27px">Quarterly</div>
<div class="t" style="left:1098.00px;top:563.00px;font-size:12.4px;font-weight:400;color:#3c3c3c;letter-spacing:-0.27px">05-07-2025</div>
<div class="t" style="left:1192.60px;top:563.00px;font-size:12.4px;font-weight:400;color:#3c3c3c;letter-spacing:-0.27px">05-10-2025</div>
<div class="t" style="left:1341.50px;top:563.00px;font-size:12.4px;font-weight:400;color:#3c3c3c;letter-spacing:-0.27px">900.00</div>
<div class="t" style="left:1420.20px;top:563.00px;font-size:12.4px;font-weight:400;color:#3c3c3c;letter-spacing:-0.27px">2025-10-28 19:38:29</div>
<svg class="a" style="left:1561px;top:563.9px;" width="10" height="10" viewBox="0 0 10 10"><path d="M7.2 0.8l2 2-6 6H1.2v-2z" fill="#333"/><path d="M6.4 1.6l2 2" stroke="#fff" stroke-width="0.5"/></svg>
<svg class="a" style="left:1582px;top:563.9px;" width="10" height="10" viewBox="0 0 10 10"><path d="M0.8 1.8h8.4v1.2H.8z M3.3.6h3.4v1.2H3.3z" fill="#333"/><path d="M1.6 3.2h6.8l-.5 6.3H2.1z" fill="#333"/><path d="M3.7 4.3v4M5 4.3v4M6.3 4.3v4" stroke="#fff" stroke-width="0.6"/></svg>
<div class="t" style="left:483.30px;top:589.00px;font-size:12.4px;font-weight:400;color:#3c3c3c;letter-spacing:-0.27px">104</div>
<div class="t" style="left:555.40px;top:589.00px;font-size:12.4px;font-weight:400;color:#3c3c3c;letter-spacing:-0.27px">Fire Safety Inspection</div>
<div class="t" style="left:739.00px;top:589.00px;font-size:12.4px;font-weight:400;color:#3c3c3c;letter-spacing:-0.27px">AMC-ELEV-004</div>
<div class="t" style="left:838.40px;top:589.00px;font-size:12.4px;font-weight:400;color:#3c3c3c;letter-spacing:-0.27px">Otis Elevator Co.</div>
<div class="t" style="left:1010.00px;top:589.00px;font-size:12.4px;font-weight:400;color:#3c3c3c;letter-spacing:-0.27px">Yearly</div>
<div class="t" style="left:1098.00px;top:589.00px;font-size:12.4px;font-weight:400;color:#3c3c3c;letter-spacing:-0.27px">20-12-2023</div>
<div class="t" style="left:1192.60px;top:589.00px;font-size:12.4px;font-weight:400;color:#3c3c3c;letter-spacing:-0.27px">20-12-2024</div>
<div class="t" style="left:1341.50px;top:589.00px;font-size:12.4px;font-weight:400;color:#3c3c3c;letter-spacing:-0.27px">18000.00</div>
<div class="t" style="left:1420.20px;top:589.00px;font-size:12.4px;font-weight:400;color:#3c3c3c;letter-spacing:-0.27px">2025-10-28 19:38:29</div>
<svg class="a" style="left:1561px;top:590.2px;" width="10" height="10" viewBox="0 0 10 10"><path d="M7.2 0.8l2 2-6 6H1.2v-2z" fill="#333"/><path d="M6.4 1.6l2 2" stroke="#fff" stroke-width="0.5"/></svg>
<svg class="a" style="left:1582px;top:590.2px;" width="10" height="10" viewBox="0 0 10 10"><path d="M0.8 1.8h8.4v1.2H.8z M3.3.6h3.4v1.2H3.3z" fill="#333"/><path d="M1.6 3.2h6.8l-.5 6.3H2.1z" fill="#333"/><path d="M3.7 4.3v4M5 4.3v4M6.3 4.3v4" stroke="#fff" stroke-width="0.6"/></svg>
<div class="t" style="left:483.30px;top:615.00px;font-size:12.4px;font-weight:400;color:#3c3c3c;letter-spacing:-0.27px">103</div>
<div class="t" style="left:555.40px;top:615.00px;font-size:12.4px;font-weight:400;color:#3c3c3c;letter-spacing:-0.27px">UPS Battery Check</div>
<div class="t" style="left:739.00px;top:615.00px;font-size:12.4px;font-weight:400;color:#3c3c3c;letter-spacing:-0.27px">AMC-UPS-003</div>
<div class="t" style="left:838.40px;top:615.00px;font-size:12.4px;font-weight:400;color:#3c3c3c;letter-spacing:-0.27px">Exide Power Solutions</div>
<div class="t" style="left:1010.00px;top:615.00px;font-size:12.4px;font-weight:400;color:#3c3c3c;letter-spacing:-0.27px">Monthly</div>
<div class="t" style="left:1098.00px;top:615.00px;font-size:12.4px;font-weight:400;color:#3c3c3c;letter-spacing:-0.27px">01-10-2025</div>
<div class="t" style="left:1192.60px;top:615.00px;font-size:12.4px;font-weight:400;color:#3c3c3c;letter-spacing:-0.27px">01-11-2025</div>
<div class="t" style="left:1341.50px;top:615.00px;font-size:12.4px;font-weight:400;color:#3c3c3c;letter-spacing:-0.27px">1200.00</div>
<div class="t" style="left:1420.20px;top:615.00px;font-size:12.4px;font-weight:400;color:#3c3c3c;letter-spacing:-0.27px">2025-10-28 19:38:29</div>
<svg class="a" style="left:1561px;top:616.5px;" width="10" height="10" viewBox="0 0 10 10"><path d="M7.2 0.8l2 2-6 6H1.2v-2z" fill="#333"/><path d="M6.4 1.6l2 2" stroke="#fff" stroke-width="0.5"/></svg>
<svg class="a" style="left:1582px;top:616.5px;" width="10" height="10" viewBox="0 0 10 10"><path d="M0.8 1.8h8.4v1.2H.8z M3.3.6h3.4v1.2H3.3z" fill="#333"/><path d="M1.6 3.2h6.8l-.5 6.3H2.1z" fill="#333"/><path d="M3.7 4.3v4M5 4.3v4M6.3 4.3v4" stroke="#fff" stroke-width="0.6"/></svg>
<div class="t" style="left:483.30px;top:642.00px;font-size:12.4px;font-weight:400;color:#3c3c3c;letter-spacing:-0.27px">102</div>
<div class="t" style="left:555.40px;top:642.00px;font-size:12.4px;font-weight:400;color:#3c3c3c;letter-spacing:-0.27px">CCTV System AMC</div>
<div class="t" style="left:739.00px;top:642.00px;font-size:12.4px;font-weight:400;color:#3c3c3c;letter-spacing:-0.27px">AMC-CCTV-002</div>
<div class="t" style="left:838.40px;top:642.00px;font-size:12.4px;font-weight:400;color:#3c3c3c;letter-spacing:-0.27px">Hikvision Services Pvt. Ltd.</div>
<div class="t" style="left:1010.00px;top:642.00px;font-size:12.4px;font-weight:400;color:#3c3c3c;letter-spacing:-0.27px">Quarterly</div>
<div class="t" style="left:1098.00px;top:642.00px;font-size:12.4px;font-weight:400;color:#3c3c3c;letter-spacing:-0.27px">10-01-2025</div>
<div class="t" style="left:1192.60px;top:642.00px;font-size:12.4px;font-weight:400;color:#3c3c3c;letter-spacing:-0.27px">10-04-2025</div>
<div class="t" style="left:1341.50px;top:642.00px;font-size:12.4px;font-weight:400;color:#3c3c3c;letter-spacing:-0.27px">3500.00</div>
<div class="t" style="left:1420.20px;top:642.00px;font-size:12.4px;font-weight:400;color:#3c3c3c;letter-spacing:-0.27px">2025-10-28 19:38:29</div>
<svg class="a" style="left:1561px;top:642.8px;" width="10" height="10" viewBox="0 0 10 10"><path d="M7.2 0.8l2 2-6 6H1.2v-2z" fill="#333"/><path d="M6.4 1.6l2 2" stroke="#fff" stroke-width="0.5"/></svg>
<svg class="a" style="left:1582px;top:642.8px;" width="10" height="10" viewBox="0 0 10 10"><path d="M0.8 1.8h8.4v1.2H.8z M3.3.6h3.4v1.2H3.3z" fill="#333"/><path d="M1.6 3.2h6.8l-.5 6.3H2.1z" fill="#333"/><path d="M3.7 4.3v4M5 4.3v4M6.3 4.3v4" stroke="#fff" stroke-width="0.6"/></svg>
<div class="t" style="left:483.30px;top:668.00px;font-size:12.4px;font-weight:400;color:#3c3c3c;letter-spacing:-0.27px">101</div>
<div class="t" style="left:555.40px;top:668.00px;font-size:12.4px;font-weight:400;color:#3c3c3c;letter-spacing:-0.27px">Air Compressor Maintenance</div>
<div class="t" style="left:739.00px;top:668.00px;font-size:12.4px;font-weight:400;color:#3c3c3c;letter-spacing:-0.27px">AMC-AC-001</div>
<div class="t" style="left:838.40px;top:668.00px;font-size:12.4px;font-weight:400;color:#3c3c3c;letter-spacing:-0.27px">Atlas Copco India Ltd.</div>
<div class="t" style="left:1010.00px;top:668.00px;font-size:12.4px;font-weight:400;color:#3c3c3c;letter-spacing:-0.27px">Yearly</div>
<div class="t" style="left:1098.00px;top:668.00px;font-size:12.4px;font-weight:400;color:#3c3c3c;letter-spacing:-0.27px">15-11-2024</div>
<div class="t" style="left:1192.60px;top:668.00px;font-size:12.4px;font-weight:400;color:#3c3c3c;letter-spacing:-0.27px">15-11-2025</div>
<div class="t" style="left:1341.50px;top:668.00px;font-size:12.4px;font-weight:400;color:#3c3c3c;letter-spacing:-0.27px">12500.00</div>
<div class="t" style="left:1420.20px;top:668.00px;font-size:12.4px;font-weight:400;color:#3c3c3c;letter-spacing:-0.27px">2025-10-28 19:38:29</div>
<svg class="a" style="left:1561px;top:669.1px;" width="10" height="10" viewBox="0 0 10 10"><path d="M7.2 0.8l2 2-6 6H1.2v-2z" fill="#333"/><path d="M6.4 1.6l2 2" stroke="#fff" stroke-width="0.5"/></svg>
<svg class="a" style="left:1582px;top:669.1px;" width="10" height="10" viewBox="0 0 10 10"><path d="M0.8 1.8h8.4v1.2H.8z M3.3.6h3.4v1.2H3.3z" fill="#333"/><path d="M1.6 3.2h6.8l-.5 6.3H2.1z" fill="#333"/><path d="M3.7 4.3v4M5 4.3v4M6.3 4.3v4" stroke="#fff" stroke-width="0.6"/></svg>
<div class="a" style="left:1430px;top:692px;width:115px;height:44px;background:#fff;border-radius:15px 15px 3px 15px;box-shadow:0 1px 4px rgba(0,0,0,.12)"></div>
<div class="t" style="left:1441.60px;top:705.00px;font-size:14px;font-weight:400;color:#222;letter-spacing:-0.45px">May I help you?</div>
<svg class="a" style="left:1552px;top:691px;" width="54" height="54" viewBox="0 0 54 54"><circle cx="27.1" cy="27.5" r="26.5" fill="#2a6cf6"/><path d="M19 33 Q27 30.5 35.5 33 L36.5 39 Q40 41 41 42.3 Q34.5 47 27 47 Q19.5 47 13.5 42.3 Q15 41 18.5 39z" fill="#f7a03c"/><path d="M25 41v5M29.5 41v5" stroke="#fbbf6e" stroke-width="0.8"/><path d="M23.8 33.2h6.6l-.4 3.8a2.9 2.9 0 0 1-5.8 0z" fill="#f6c0a4"/><path d="M23.6 33.6q3.6 2 7 0" stroke="#3a1f2e" stroke-width="1.1" fill="none"/><circle cx="19.8" cy="26.3" r="1.7" fill="#f5c4a8"/><circle cx="34.8" cy="26.3" r="1.7" fill="#f5c4a8"/><ellipse cx="27.3" cy="26.4" rx="7" ry="7.2" fill="#f8d2bb"/><ellipse cx="22.8" cy="29.4" rx="1.4" ry="0.8" fill="#f2a49c"/><ellipse cx="31.8" cy="29.4" rx="1.4" ry="0.8" fill="#f2a49c"/><circle cx="24.6" cy="27" r="0.75" fill="#3b2a2a"/><circle cx="30" cy="27" r="0.75" fill="#3b2a2a"/><path d="M20 25.5Q18.6 19 21.2 15.6Q18.8 12.4 21.6 12.6Q22.6 10.2 24.8 12Q25.8 10.4 27.8 12Q29 10.6 30.4 12.6Q35 12.8 37.8 18L35.5 17.8Q36.2 21.5 35 25.5Q34.2 20.6 30.2 19.4Q25.2 20.8 21.4 19.6Q20.4 22.2 20 25.5z" fill="#3b1f2f"/></svg>
<div class="a" style="left:1654px;top:625px;width:210px;height:210px;background:#1361bd;border-radius:2px"></div>
<svg class="a" style="left:1710px;top:744px;" width="24" height="14" viewBox="0 0 24 14"><path d="M2 0h20l-10 12z" fill="#fff"/></svg>
<svg class="a" style="left:1785px;top:744px;" width="24" height="14" viewBox="0 0 24 14"><path d="M2 0h20l-10 12z" fill="#fff"/></svg>
<div class="a" style="left:1695px;top:689px;width:181px;height:58px;background:#fff;border-radius:29px;box-shadow:0 2px 6px rgba(0,0,0,.15)"></div>
<div class="t" style="left:1712.50px;top:707.00px;font-size:21px;font-weight:400;color:#232550;">Whatsapp</div>
<svg class="a" style="left:1821px;top:693px;" width="50" height="50" viewBox="0 0 50 50"><circle cx="25" cy="25" r="24.5" fill="#d8fae4"/><path d="M25 9.5a15.5 15.5 0 0 0-13.3 23.4L9.5 40.5l7.9-2.1A15.5 15.5 0 1 0 25 9.5z" fill="#4dc95a"/><path d="M19.2 17.5c.6-.6 1.5-.5 1.9.2l1.6 2.6c.3.6.2 1.2-.3 1.6l-1 .9c.9 2 2.6 3.8 4.7 4.7l.9-1c.4-.5 1.1-.6 1.6-.3l2.6 1.6c.7.4.8 1.3.2 1.9l-1 1.1c-1.1 1.1-2.9 1.2-4.4.4-3.6-1.8-6.5-4.7-8.3-8.3-.8-1.5-.7-3.3.4-4.4z" fill="#fff"/></svg>
<div class="a" style="left:1801px;top:773px;width:75px;height:75px;background:#00f5a0;border-radius:40%;box-shadow:0 1px 3px rgba(0,0,0,.08)"></div>
<svg class="a" style="left:1826px;top:798px;" width="25" height="25" viewBox="0 0 25 25"><path d="M3.5 3.5l18 18M21.5 3.5l-18 18" stroke="#000" stroke-width="3.1" stroke-linecap="round"/></svg>
</body></html>
